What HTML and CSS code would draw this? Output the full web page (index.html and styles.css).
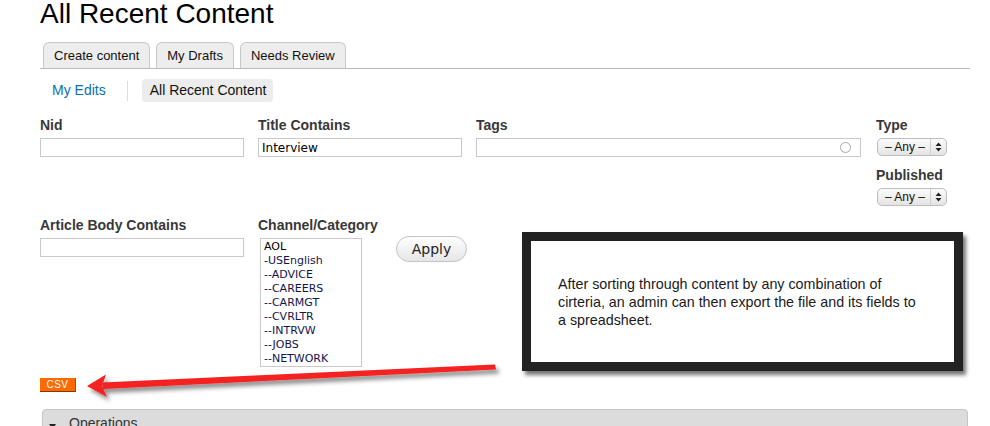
FILE: index.html
```html
<!DOCTYPE html>
<html lang="en">
<head>
<meta charset="utf-8">
<title>All Recent Content</title>
<link rel="stylesheet" href="styles.css">
</head>
<body>
<div class="page">
  <h1 class="title">All Recent Content</h1>

  <ul class="tabs">
    <li class="tab">Create content</li>
    <li class="tab">My Drafts</li>
    <li class="tab">Needs Review</li>
  </ul>

  <div class="subtabs">
    <a class="subtab link" href="#">My Edits</a>
    <span class="subtab-sep"></span>
    <span class="subtab active">All Recent Content</span>
  </div>

  <form class="filters">
    <div class="row row1">
      <div class="field w-std">
        <label class="lbl">Nid</label>
        <div class="input"></div>
      </div>
      <div class="field w-std">
        <label class="lbl">Title Contains</label>
        <div class="input">Interview</div>
      </div>
      <div class="field w-tags">
        <label class="lbl">Tags</label>
        <div class="input tags-input"><span class="throbber"></span></div>
      </div>
      <div class="field col-type">
        <label class="lbl">Type</label>
        <div class="select"><span class="sel-text">&ndash; Any &ndash;</span><span class="sel-arrows"><svg width="7" height="10" viewBox="0 0 7 10"><path d="M3.5 0.5 L6.5 4 L0.5 4 Z M0.5 6 L6.5 6 L3.5 9.5 Z" fill="#222"/></svg></span></div>
        <label class="lbl lbl-next">Published</label>
        <div class="select"><span class="sel-text">&ndash; Any &ndash;</span><span class="sel-arrows"><svg width="7" height="10" viewBox="0 0 7 10"><path d="M3.5 0.5 L6.5 4 L0.5 4 Z M0.5 6 L6.5 6 L3.5 9.5 Z" fill="#222"/></svg></span></div>
      </div>
    </div>

    <div class="row row2">
      <div class="field w-std">
        <label class="lbl">Article Body Contains</label>
        <div class="input"></div>
      </div>
      <div class="field w-list">
        <label class="lbl nowrap">Channel/Category</label>
        <div class="listbox" role="listbox">
          <div class="opt top">AOL</div>
          <div class="opt">-USEnglish</div>
          <div class="opt">--ADVICE</div>
          <div class="opt">--CAREERS</div>
          <div class="opt">--CARMGT</div>
          <div class="opt">--CVRLTR</div>
          <div class="opt">--INTRVW</div>
          <div class="opt">--JOBS</div>
          <div class="opt">--NETWORK</div>
        </div>
      </div>
      <button type="button" class="apply">Apply</button>
    </div>
  </form>

  <div class="csv-row"><span class="csv">CSV</span></div>

  <div class="ops">
    <svg class="ops-tri" width="7" height="5" viewBox="0 0 7 5"><path d="M0 0 L7 0 L3.5 5 Z" fill="#222"/></svg>
    <span class="ops-text">Operations</span>
  </div>

  <div class="callout">
    <p class="callout-text">After sorting through content by any combination of<br>cirteria, an admin can then export the file and its fields to<br>a spreadsheet.</p>
  </div>

  <svg class="arrow" width="430" height="50" viewBox="80 355 430 50">
    <defs>
      <filter id="ashadow" x="-10%" y="-50%" width="120%" height="200%">
        <feDropShadow dx="3" dy="4" stdDeviation="2" flood-color="#000" flood-opacity="0.45"/>
      </filter>
    </defs>
    <g filter="url(#ashadow)" fill="#f52020">
      <polygon points="495,364.5 496,369.5 103,389 102,382.5"/>
      <polygon points="106,374.5 87,386 107,397 102,386"/>
    </g>
  </svg>
</div>
</body>
</html>
```
FILE: styles.css
```css
html, body {
  margin: 0;
  padding: 0;
  overflow: hidden;
  background: #fff;
}

.page {
  position: relative;
  padding: 0 20px 0 40px;
  font-family: "Liberation Sans", Arial, sans-serif;
  color: #333;
}

.title {
  margin: 0;
  font-size: 28px;
  line-height: 27px;
  font-weight: normal;
  color: #000;
}

.tabs {
  list-style: none;
  margin: 15px 0 0;
  padding: 0 0 0 3px;
  display: flex;
  gap: 6px;
  border-bottom: 1px solid #bbb;
}

.tab {
  background: #ededed;
  border: 1px solid #c8c8c8;
  border-bottom: none;
  border-radius: 6px 6px 0 0;
  padding: 0 10px;
  font-size: 13px;
  line-height: 25px;
  color: #111;
}

.subtabs {
  margin-top: 10px;
  display: flex;
  align-items: center;
  height: 23px;
}

.subtab {
  font-size: 14px;
  line-height: 23px;
  text-decoration: none;
}

.link {
  color: #0a6fb5;
  margin-left: 12px;
}

.subtab-sep {
  width: 1px;
  height: 20px;
  background: #dcdcdc;
  margin: 0 14px 0 21px;
}

.active {
  background: #ececec;
  border-radius: 4px;
  padding: 0 7px 0 8px;
  color: #111;
}

.filters {
  margin: 0;
}

.row {
  display: flex;
  gap: 14px;
}

.row1 {
  margin-top: 15px;
}

.row2 {
  margin-top: 11px;
}

.field {
  display: flex;
  flex-direction: column;
}

.w-std {
  width: 204px;
}

.w-tags {
  width: 385px;
}

.w-list {
  width: 104px;
}

.lbl {
  font-size: 14px;
  line-height: 16px;
  font-weight: bold;
  color: #383838;
  margin-bottom: 5px;
}

.nowrap {
  white-space: nowrap;
}

.lbl-next {
  margin-top: 11px;
  margin-bottom: 5px;
}

.input {
  box-sizing: border-box;
  height: 19px;
  border: 1px solid #c9c9c9;
  padding: 1px 3px 0;
  font-family: "DejaVu Sans", sans-serif;
  font-size: 12px;
  line-height: 17px;
  color: #000;
}

.tags-input {
  position: relative;
}

.throbber {
  position: absolute;
  right: 9px;
  top: 3px;
  width: 9px;
  height: 9px;
  border: 1.5px solid #a8a8a8;
  border-radius: 50%;
}

.col-type {
  margin-left: 1px;
  width: 80px;
}

.select {
  box-sizing: border-box;
  width: 70px;
  height: 18px;
  margin-left: 1px;
  border: 1px solid #bdbdbd;
  border-radius: 5px;
  background: linear-gradient(#fbfbfb, #e4e4e4);
  display: flex;
  align-items: center;
  font-size: 12px;
  color: #111;
}

.sel-text {
  flex: 1;
  padding-left: 7px;
  line-height: 16px;
  white-space: nowrap;
}

.sel-arrows {
  width: 15px;
  height: 16px;
  border-left: 1px solid #cfcfcf;
  display: flex;
  align-items: center;
  justify-content: center;
}

.listbox {
  box-sizing: border-box;
  width: 102px;
  height: 129px;
  margin-left: 2px;
  border: 1px solid #c9c9c9;
  padding: 1px 3px;
  font-family: "DejaVu Sans", sans-serif;
  font-size: 11px;
  line-height: 14px;
  color: #14144a;
  overflow: hidden;
}

.opt.top {
  color: #000;
}

.apply {
  align-self: flex-start;
  margin: 19px 0 0 20px;
  width: 71px;
  height: 26px;
  border: 1px solid #c4c4c4;
  border-radius: 13px;
  background: linear-gradient(#fefefe, #e6e6e6);
  font-family: "DejaVu Sans", sans-serif;
  font-size: 14px;
  color: #222;
  padding: 0;
}

.csv-row {
  margin-top: 11px;
  display: flex;
}

.csv {
  box-sizing: border-box;
  width: 36px;
  height: 14px;
  background: #ff6a00;
  border-bottom: 1px solid #8a3500;
  border-right: 1px solid #b04800;
  color: #fff;
  font-size: 10px;
  line-height: 13px;
  text-align: center;
  letter-spacing: 0.5px;
}

.ops {
  box-sizing: border-box;
  margin: 17px 0 0 2px;
  width: 926px;
  height: 32px;
  background: #dcdcdc;
  border: 1px solid #c6c6c6;
  border-radius: 4px 4px 0 0;
  display: flex;
  align-items: flex-start;
  padding: 4px 0 0 6px;
}

.ops-tri {
  margin-top: 10px;
}

.ops-text {
  margin-left: 13px;
  font-size: 14px;
  line-height: 18px;
  color: #333;
}

.callout {
  position: absolute;
  left: 522px;
  top: 232px;
  box-sizing: border-box;
  width: 441px;
  height: 139px;
  border: 9px solid #222;
  background: #fff;
  box-shadow: 3px 4px 4px rgba(0, 0, 0, 0.55);
  padding: 34px 0 0 27px;
}

.callout-text {
  margin: 0;
  font-size: 14.3px;
  line-height: 18px;
  color: #1a1a1a;
}

.arrow {
  position: absolute;
  left: 80px;
  top: 355px;
}
```
